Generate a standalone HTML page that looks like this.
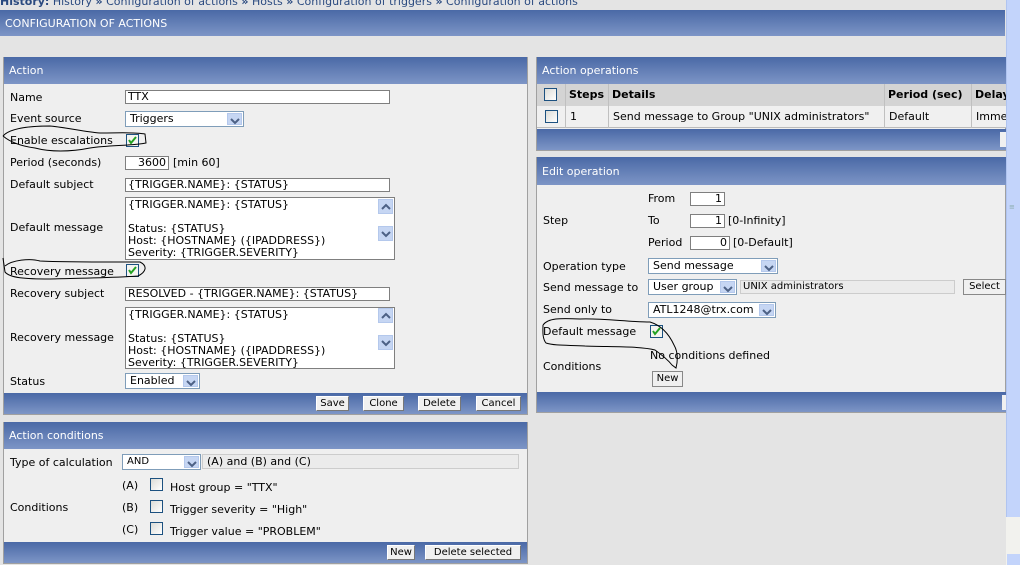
<!DOCTYPE html>
<html><head><meta charset="utf-8">
<style>
*{box-sizing:border-box;margin:0;padding:0}
body{width:1020px;height:565px;overflow:hidden;background:#e4e4e4;font-family:"DejaVu Sans","Liberation Sans",sans-serif;font-size:11px;color:#000;position:relative}
.a{position:absolute;white-space:nowrap}
.hdr{position:absolute;background:linear-gradient(#4a69a6,#7d95c6);color:#fff;font-size:11px;padding-left:5px;display:flex;align-items:center}
.bar{position:absolute;background:linear-gradient(#4a69a6,#7d95c6)}
.pan{position:absolute;background:#efefef;border:1px solid #a0a0a0}
.in{position:absolute;background:#fff;border:1px solid #7f7f7f;padding-left:2px;font-size:11px;line-height:12px;white-space:nowrap;overflow:hidden}
.sel{position:absolute;background:#fff;border:1px solid #7f9db9;padding-left:4px;font-size:11px;line-height:14px;white-space:nowrap}
.arr{position:absolute;right:1px;top:1px;bottom:1px;width:15px;background:#c6d6f3;border:1px solid #b4c8ec}
.arr svg,.sb svg{position:absolute;left:2px;top:2px}
.btn{position:absolute;background:#f0f0f0;border:1px solid #888;border-color:#fff #777 #777 #fff;font-size:10px;text-align:center;line-height:14px}
.cb{position:absolute;width:13px;height:13px;border:1px solid #1c5180;background:linear-gradient(135deg,#dcdcd7,#fff)}
.cbk{position:absolute;width:13px;height:13px;border:1px solid #1c5180;background:#f4f4f0}
.ta{position:absolute;background:#fff;border:1px solid #7f7f7f;font-size:11px;line-height:12px;padding:1px 2px;white-space:pre;overflow:hidden}
.sb{position:absolute;width:15px;height:15px;background:#c6d6f3;border:1px solid #b4c8ec}
</style></head><body>
<div class="a" style="left:0;top:-5px;font-size:11px;color:#2a4a80"><b>History:</b> History <b>»</b> Configuration of actions <b>»</b> Hosts <b>»</b> Configuration of triggers <b>»</b> Configuration of actions</div>
<div class="hdr" style="left:0;top:10px;width:1005px;height:26px">CONFIGURATION OF ACTIONS</div>

<div class="a" style="left:1006px;top:0;width:14px;height:517px;background:#c3d4fb;border-left:1px solid #b0c4f0"></div>
<div class="a" style="left:1006px;top:517px;width:14px;height:48px;background:#f2f2ee"></div>
<div class="a" style="left:1009px;top:203px;font-size:7px;color:#8aa">≡</div>
<div class="a" style="left:1007px;top:554px;width:13px;height:11px;background:#c3d4fb"></div>

<!-- Action panel -->
<div class="pan" style="left:3px;top:57px;width:525px;height:358px"></div>
<div class="hdr" style="left:4px;top:57px;width:523px;height:27px">Action</div>
<div class="a" style="left:10px;top:91px">Name</div>
<div class="in" style="left:125px;top:90px;width:265px;height:14px">TTX</div>
<div class="a" style="left:10px;top:112px">Event source</div>
<div class="sel" style="left:125px;top:111px;width:119px;height:16px">Triggers<div class="arr"><svg width="10" height="10"><path d="M1 3l4 4 4-4" stroke="#4d6185" stroke-width="2" fill="none"/></svg></div></div>
<div class="a" style="left:10px;top:134px">Enable escalations</div>
<div class="cbk" style="left:126px;top:134px"><svg width="11" height="11" style="position:absolute;left:0;top:0"><path d="M2 5l2 3 5-6" stroke="#21a121" stroke-width="2" fill="none"/></svg></div>
<div class="a" style="left:10px;top:156px">Period (seconds)</div>
<div class="in" style="left:125px;top:156px;width:44px;height:14px;text-align:right;padding-right:2px">3600</div>
<div class="a" style="left:173px;top:156px">[min 60]</div>
<div class="a" style="left:10px;top:178px">Default subject</div>
<div class="in" style="left:125px;top:178px;width:265px;height:14px">{TRIGGER.NAME}: {STATUS}</div>
<div class="a" style="left:10px;top:221px">Default message</div>
<div class="ta" style="left:125px;top:197px;width:270px;height:63px">{TRIGGER.NAME}: {STATUS}

Status: {STATUS}
Host: {HOSTNAME} ({IPADDRESS})
Severity: {TRIGGER.SEVERITY}</div>
<div class="sb" style="left:378px;top:199px"><svg width="10" height="10"><path d="M1 7l4-4 4 4" stroke="#4d6185" stroke-width="2" fill="none"/></svg></div><div class="sb" style="left:378px;top:226px"><svg width="10" height="10"><path d="M1 3l4 4 4-4" stroke="#4d6185" stroke-width="2" fill="none"/></svg></div>
<div class="a" style="left:10px;top:265px">Recovery message</div>
<div class="cbk" style="left:126px;top:264px"><svg width="11" height="11" style="position:absolute;left:0;top:0"><path d="M2 5l2 3 5-6" stroke="#21a121" stroke-width="2" fill="none"/></svg></div>
<div class="a" style="left:10px;top:287px">Recovery subject</div>
<div class="in" style="left:125px;top:287px;width:265px;height:14px">RESOLVED - {TRIGGER.NAME}: {STATUS}</div>
<div class="a" style="left:10px;top:331px">Recovery message</div>
<div class="ta" style="left:125px;top:307px;width:270px;height:62px">{TRIGGER.NAME}: {STATUS}

Status: {STATUS}
Host: {HOSTNAME} ({IPADDRESS})
Severity: {TRIGGER.SEVERITY}</div>
<div class="sb" style="left:378px;top:308px"><svg width="10" height="10"><path d="M1 7l4-4 4 4" stroke="#4d6185" stroke-width="2" fill="none"/></svg></div><div class="sb" style="left:378px;top:335px"><svg width="10" height="10"><path d="M1 3l4 4 4-4" stroke="#4d6185" stroke-width="2" fill="none"/></svg></div>
<div class="a" style="left:10px;top:375px">Status</div>
<div class="sel" style="left:125px;top:373px;width:75px;height:16px">Enabled<div class="arr"><svg width="10" height="10"><path d="M1 3l4 4 4-4" stroke="#4d6185" stroke-width="2" fill="none"/></svg></div></div>
<div class="bar" style="left:4px;top:393px;width:523px;height:21px"></div>
<div class="btn" style="left:316px;top:396px;width:33px;height:15px">Save</div>
<div class="btn" style="left:363px;top:396px;width:41px;height:15px">Clone</div>
<div class="btn" style="left:418px;top:396px;width:43px;height:15px">Delete</div>
<div class="btn" style="left:476px;top:396px;width:45px;height:15px">Cancel</div>

<!-- Action conditions -->
<div class="pan" style="left:3px;top:422px;width:525px;height:142px"></div>
<div class="hdr" style="left:4px;top:422px;width:523px;height:27px">Action conditions</div>
<div class="a" style="left:10px;top:456px">Type of calculation</div>
<div class="sel" style="left:122px;top:454px;width:79px;height:16px;font-size:10px">AND<div class="arr"><svg width="10" height="10"><path d="M1 3l4 4 4-4" stroke="#4d6185" stroke-width="2" fill="none"/></svg></div></div>
<div class="a" style="left:202px;top:454px;width:317px;height:15px;border:1px solid #ccc;background:#ebebeb;padding-left:4px;line-height:13px">(A) and (B) and (C)</div>
<div class="a" style="left:10px;top:501px">Conditions</div>
<div class="a" style="left:122px;top:479px">(A)</div><div class="cb" style="left:150px;top:478px"></div><div class="a" style="left:170px;top:481px">Host group = "TTX"</div>
<div class="a" style="left:122px;top:501px">(B)</div><div class="cb" style="left:150px;top:500px"></div><div class="a" style="left:170px;top:503px">Trigger severity = "High"</div>
<div class="a" style="left:122px;top:523px">(C)</div><div class="cb" style="left:150px;top:522px"></div><div class="a" style="left:170px;top:525px">Trigger value = "PROBLEM"</div>
<div class="bar" style="left:4px;top:542px;width:523px;height:21px"></div>
<div class="btn" style="left:387px;top:545px;width:28px;height:15px">New</div>
<div class="btn" style="left:425px;top:545px;width:96px;height:15px">Delete selected</div>

<!-- Action operations -->
<div class="pan" style="left:536px;top:57px;width:470px;height:94px"></div>
<div class="hdr" style="left:537px;top:57px;width:469px;height:27px">Action operations</div>
<div class="a" style="left:537px;top:84px;width:469px;height:22px;background:#d4d4d4"></div>
<div class="a" style="left:537px;top:106px;width:469px;height:22px;background:#f0f0f0;border-bottom:1px solid #bbb"></div>
<div class="a" style="left:565px;top:84px;width:1px;height:44px;background:#c0c0c0"></div>
<div class="a" style="left:608px;top:84px;width:1px;height:44px;background:#c0c0c0"></div>
<div class="a" style="left:884px;top:84px;width:1px;height:44px;background:#c0c0c0"></div>
<div class="a" style="left:971px;top:84px;width:1px;height:44px;background:#c0c0c0"></div>
<div class="cb" style="left:544px;top:88px"></div>
<div class="a" style="left:569px;top:88px;font-weight:bold">Steps</div>
<div class="a" style="left:612px;top:88px;font-weight:bold">Details</div>
<div class="a" style="left:888px;top:88px;font-weight:bold">Period (sec)</div>
<div class="a" style="left:975px;top:88px;font-weight:bold;width:31px;overflow:hidden">Delay</div>
<div class="cb" style="left:545px;top:110px"></div>
<div class="a" style="left:570px;top:110px">1</div>
<div class="a" style="left:613px;top:110px">Send message to Group "UNIX administrators"</div>
<div class="a" style="left:889px;top:110px">Default</div>
<div class="a" style="left:976px;top:110px;width:30px;overflow:hidden">Immediately</div>
<div class="bar" style="left:537px;top:129px;width:469px;height:21px"></div>
<div class="a" style="left:1000px;top:132px;width:6px;height:15px;background:#f0f0f0"></div>

<!-- Edit operation -->
<div class="pan" style="left:536px;top:157px;width:470px;height:256px"></div>
<div class="hdr" style="left:537px;top:157px;width:469px;height:28px">Edit operation</div>
<div class="a" style="left:543px;top:214px">Step</div>
<div class="a" style="left:648px;top:192px">From</div><div class="in" style="left:690px;top:192px;width:35px;height:14px;text-align:right;padding-right:2px">1</div>
<div class="a" style="left:648px;top:214px">To</div><div class="in" style="left:690px;top:214px;width:35px;height:14px;text-align:right;padding-right:2px">1</div><div class="a" style="left:728px;top:214px">[0-Infinity]</div>
<div class="a" style="left:648px;top:236px">Period</div><div class="in" style="left:690px;top:236px;width:40px;height:14px;text-align:right;padding-right:2px">0</div><div class="a" style="left:733px;top:236px">[0-Default]</div>
<div class="a" style="left:543px;top:260px">Operation type</div>
<div class="sel" style="left:648px;top:258px;width:130px;height:16px">Send message<div class="arr"><svg width="10" height="10"><path d="M1 3l4 4 4-4" stroke="#4d6185" stroke-width="2" fill="none"/></svg></div></div>
<div class="a" style="left:543px;top:281px">Send message to</div>
<div class="sel" style="left:648px;top:279px;width:89px;height:16px">User group<div class="arr"><svg width="10" height="10"><path d="M1 3l4 4 4-4" stroke="#4d6185" stroke-width="2" fill="none"/></svg></div></div>
<div class="a" style="left:740px;top:280px;width:215px;height:14px;border:1px solid #ccc;background:#ebebeb;padding-left:2px;font-size:10px;line-height:12px">UNIX administrators</div>
<div class="btn" style="left:963px;top:279px;width:43px;height:16px;border:1px solid #888">Select</div>
<div class="a" style="left:543px;top:303px">Send only to</div>
<div class="sel" style="left:648px;top:302px;width:128px;height:16px">ATL1248@trx.com<div class="arr"><svg width="10" height="10"><path d="M1 3l4 4 4-4" stroke="#4d6185" stroke-width="2" fill="none"/></svg></div></div>
<div class="a" style="left:543px;top:325px">Default message</div>
<div class="cbk" style="left:650px;top:325px"><svg width="11" height="11" style="position:absolute;left:0;top:0"><path d="M2 5l2 3 5-6" stroke="#21a121" stroke-width="2" fill="none"/></svg></div>
<div class="a" style="left:543px;top:360px">Conditions</div>
<div class="a" style="left:650px;top:349px">No conditions defined</div>
<div class="btn" style="left:652px;top:371px;width:31px;height:16px;border:1px solid #888">New</div>
<div class="bar" style="left:537px;top:392px;width:469px;height:20px"></div>
<div class="a" style="left:1002px;top:395px;width:4px;height:15px;background:#f0f0f0"></div>

<svg class="a" style="left:0;top:0" width="1020" height="565">
<g fill="none" stroke="#000" stroke-width="1">
<path d="M3 136 C10 128 30 126 50 126 C70 128 85 132 100 133 C120 133 135 132 145 134 L146 143 C130 146 110 145 90 148 C70 152 50 152 35 148 C20 146 10 142 3 136"/>
<path d="M5 266 C12 260 30 258 40 261 C60 262 90 262 120 262 L140 262 C148 266 146 272 138 276 C110 278 80 278 50 279 C25 279 10 278 5 272 L3 258"/>
<path d="M543 325 C548 318 560 318 580 319 C600 318 630 322 650 322 C660 325 668 332 674 345 C678 352 678 360 676 368 L672 365 C668 360 662 355 655 350 C640 346 610 347 585 346 C570 345 555 346 546 343 C542 338 543 330 543 325"/>
</g></svg>
</body></html>
